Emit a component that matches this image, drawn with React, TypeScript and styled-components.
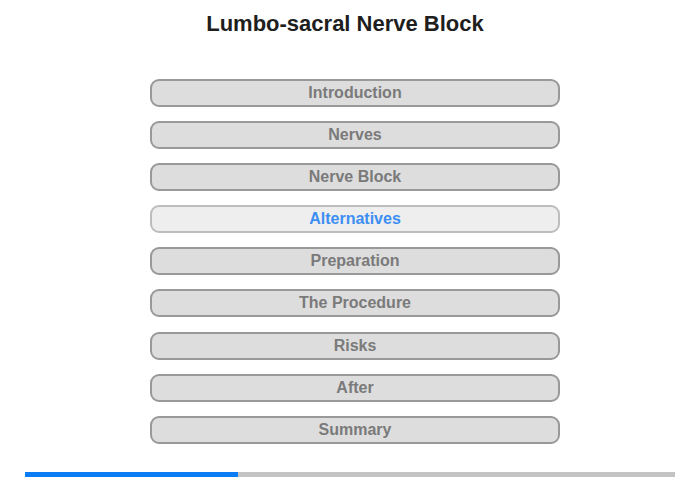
import React from "react";
import styled, { createGlobalStyle } from "styled-components";

const Global = createGlobalStyle`
  html, body { margin: 0; padding: 0; background: #fff; }
  body { font-family: "Liberation Sans", Arial, sans-serif; }
`;

const Page = styled.div`
  width: 700px;
  height: 480px;
  display: flex;
  flex-direction: column;
  align-items: center;
  box-sizing: border-box;
`;

const Title = styled.h1`
  margin: 12px 0 0 -10px;
  font-size: 22px;
  line-height: 24px;
  font-weight: bold;
  color: #1e1e1e;
`;

const Menu = styled.nav`
  margin: 43px 0 0 10px;
  display: flex;
  flex-direction: column;
  gap: 14.1px;
  width: 410px;
`;

const Item = styled.div<{ $active?: boolean }>`
  box-sizing: border-box;
  height: 28px;
  border-radius: 9px;
  border: 2px solid ${(p) => (p.$active ? "#bdbdbd" : "#999")};
  background: ${(p) => (p.$active ? "#eeeeee" : "#dddddd")};
  color: ${(p) => (p.$active ? "#3d8ef2" : "#7a7a7a")};
  font-size: 16px;
  font-weight: bold;
  display: flex;
  align-items: center;
  justify-content: center;
`;

const Progress = styled.div`
  margin-top: 28px;
  width: 650px;
  height: 5px;
  background: #c4c4c4;
  display: flex;
`;

const Fill = styled.div`
  height: 100%;
  background: #0a7cf5;
`;

const items = [
  "Introduction",
  "Nerves",
  "Nerve Block",
  "Alternatives",
  "Preparation",
  "The Procedure",
  "Risks",
  "After",
  "Summary",
];

export default function App() {
  return (
    <Page>
      <Global />
      <Title>Lumbo-sacral Nerve Block</Title>
      <Menu>
        {items.map((t) => (
          <Item key={t} $active={t === "Alternatives"}>
            {t}
          </Item>
        ))}
      </Menu>
      <Progress>
        <Fill style={{ width: 213 }} />
      </Progress>
    </Page>
  );
}
